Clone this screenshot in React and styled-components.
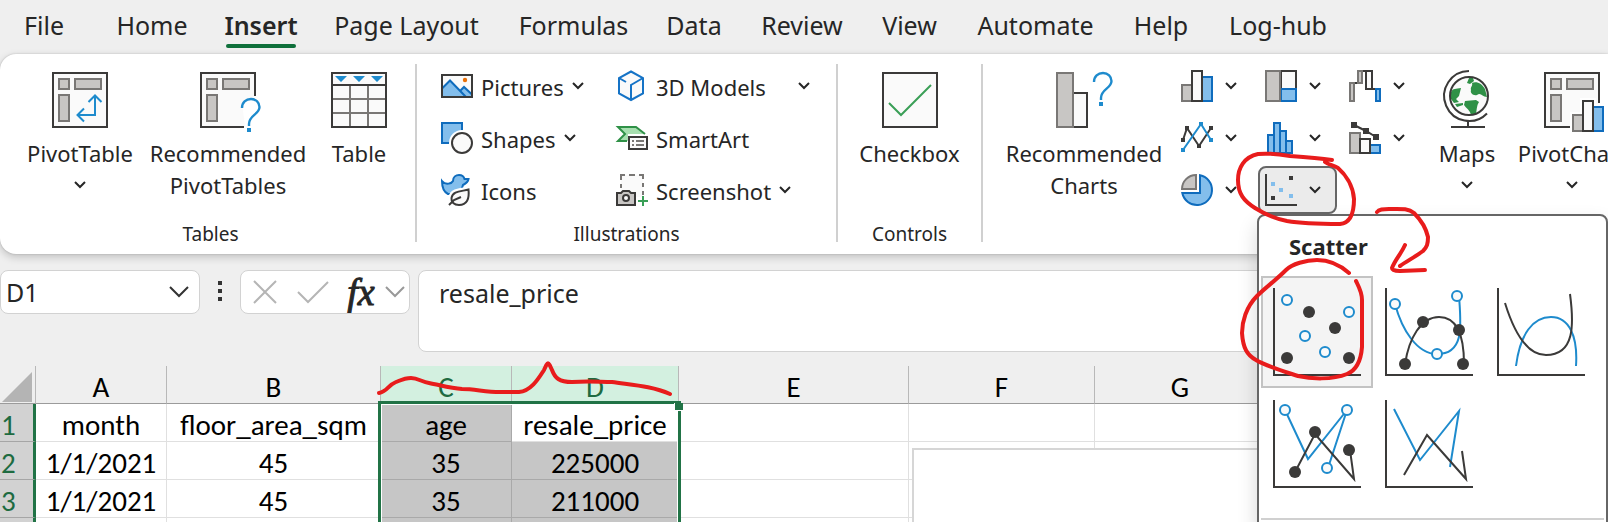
import React from "react";
import styled, { createGlobalStyle, css } from "styled-components";

const UI = '"Noto Sans", "Open Sans", sans-serif';
const CELL = 'Carlito, Lato, "Noto Sans", sans-serif';
const INK = "#3b3a39";
const GREY = "#797775";
const GREYFILL = "#c8c6c4";
const PAPER = "#fafafa";
const BLUE = "#0f6cbd";
const BLUEFILL = "#83beec";
const ACCENT = "#1e8bcd";
const GREEN = "#217346";

const GlobalStyle = createGlobalStyle`
  *, *::before, *::after { box-sizing: border-box; }
  body { margin: 0; background: #efefef; font-family: ${UI}; color: #262626; }
  button, input, textarea { font: inherit; color: inherit; margin: 0; }
`;

const Page = styled.div`
  position: relative;
  display: flex;
  flex-direction: column;
  height: 100vh;
  overflow: hidden;
  background: #efefef;
`;

const plainButton = css`
  border: 0;
  background: none;
  padding: 0;
  cursor: pointer;
`;

/* Tab strip */
const Tabs = styled.nav`
  display: flex;
  flex: none;
  height: 54px;
  padding: 0 6px;
`;
const Tab = styled.button`
  ${plainButton}
  position: relative;
  flex: none;
  width: ${(p) => p.$w}px;
  height: 52px;
  padding-bottom: 2px;
  font-size: 25px;
  line-height: 50px;
  white-space: nowrap;
  font-weight: ${(p) => (p.$active ? 600 : 400)};
  &::after {
    content: "";
    display: ${(p) => (p.$active ? "block" : "none")};
    position: absolute;
    left: 4px;
    right: 4px;
    bottom: 4px;
    height: 4px;
    border-radius: 2px;
    background: #0f703b;
  }
`;

/* Ribbon */
const Ribbon = styled.div`
  position: relative;
  z-index: 2;
  display: flex;
  flex: none;
  padding: 6px 0 6px 6px;
  background: #fff;
  border-radius: 16px 0 0 16px;
  box-shadow: 0 0 2px rgba(0, 0, 0, 0.2), 0 3px 8px rgba(0, 0, 0, 0.2);
`;
const Group = styled.section`
  flex: none;
  display: flex;
  flex-direction: column;
  width: ${(p) => (p.$w ? `${p.$w}px` : "auto")};
`;
const GroupBody = styled.div`
  display: flex;
  min-height: 156px;
  padding-left: ${(p) => p.$pad || 0}px;
`;
const GroupLabel = styled.div`
  margin-top: 4px;
  font-size: 19px;
  line-height: 28px;
  text-align: center;
`;
const Divider = styled.div`
  flex: none;
  width: 2px;
  margin: 4px 0 6px;
  background: #d0d0d0;
`;
const BigButton = styled.button`
  ${plainButton}
  flex: none;
  display: flex;
  flex-direction: column;
  align-items: center;
  width: ${(p) => p.$w}px;
  padding-top: 12px;
`;
const BigLabel = styled.span`
  display: flex;
  flex-direction: column;
  align-items: center;
  margin-top: 9px;
  font-size: 22px;
  line-height: 32px;
  white-space: nowrap;
`;
const ChevronLine = styled.span`
  display: flex;
  align-items: center;
  height: 32px;
`;
const CommandGrid = styled.div`
  display: grid;
  grid-template-columns: 175px auto;
  grid-auto-rows: 52px;
`;
const Command = styled.button`
  ${plainButton}
  display: flex;
  align-items: center;
  gap: 8px;
  font-size: 22px;
  white-space: nowrap;
`;
const CommandText = styled.span`
  padding: 2px ${(p) => (p.$split ? 24 : 0)}px 0 0;
`;
const Gallery = styled.div`
  flex: none;
  display: grid;
  grid-template-columns: repeat(3, 84px);
  grid-auto-rows: 52px;
`;
const GalleryItem = styled.div`
  position: relative;
  display: flex;
  align-items: center;
`;
const ChartButton = styled.button`
  ${plainButton}
  position: relative;
  display: flex;
  align-items: center;
  justify-content: space-between;
  width: 79px;
  height: 48px;
  padding: 0 14px 0 5px;
  border: 2px solid ${(p) => (p.$open ? "#666" : "transparent")};
  border-radius: 8px;
  background: ${(p) => (p.$open ? "#ebebeb" : "transparent")};
`;
const Icon = styled.svg`
  flex: none;
  display: block;
  overflow: visible;
  fill: none;
`;

/* Scatter drop-down */
const Menu = styled.div`
  position: absolute;
  top: 50px;
  left: -1px;
  width: 351px;
  padding: 0 2px 8px;
  background: #fff;
  border: 2px solid #666;
  border-radius: 8px;
  box-shadow: 0 10px 20px rgba(0, 0, 0, 0.16);
`;
const MenuTitle = styled.h2`
  margin: 0;
  padding: 0 0 0 28px;
  height: 60px;
  font-size: 22px;
  line-height: 60px;
  font-weight: 700;
`;
const MenuGrid = styled.div`
  display: grid;
  grid-template-columns: repeat(3, 112px);
  grid-auto-rows: 112px;
  padding-bottom: 18px;
  border-bottom: 2px solid #d0d0d0;
`;
const Tile = styled.button`
  ${plainButton}
  display: flex;
  padding: 10px;
  border: 2px solid ${(p) => (p.$active ? "#c3c3c3" : "transparent")};
  background: ${(p) => (p.$active ? "#f4f4f4" : "transparent")};
`;

/* Formula bar */
const FormulaBar = styled.div`
  flex: none;
  display: flex;
  align-items: flex-start;
  padding: 16px 0 14px;
`;
const Box = styled.div`
  flex: ${(p) => (p.$grow ? "1 1 0" : "none")};
  display: flex;
  align-items: center;
  width: ${(p) => (p.$w ? `${p.$w}px` : "auto")};
  height: ${(p) => (p.$tall ? 82 : 44)}px;
  margin-left: ${(p) => (p.$grow ? 8 : 0)}px;
  padding-right: ${(p) => p.$pr || 0}px;
  background: #fff;
  border: 1px solid #d2d2d2;
  border-radius: 8px;
  overflow: hidden;
`;
const NameInput = styled.input`
  flex: 1;
  min-width: 0;
  height: 42px;
  border: 0;
  padding: 0 0 0 5px;
  background: none;
  outline: none;
  font-size: 25px;
`;
const FormulaText = styled.textarea`
  flex: 1;
  height: 80px;
  border: 0;
  padding: 4px 20px;
  resize: none;
  outline: none;
  background: none;
  font-size: 25px;
  line-height: 36px;
`;
const IconButton = styled.button`
  ${plainButton}
  flex: none;
  display: flex;
  align-items: center;
  justify-content: center;
  width: ${(p) => p.$w}px;
  height: 42px;
`;
const Fx = styled.span`
  padding-left: 4px;
  font: italic 400 38px/38px "Liberation Serif", serif;
  color: #262626;
  -webkit-text-stroke: 1px #262626;
`;

/* Sheet */
const SheetArea = styled.div`
  position: relative;
  flex: 1;
  min-height: 0;
`;
const Sheet = styled.table`
  width: 100%;
  table-layout: fixed;
  border-collapse: separate;
  border-spacing: 0;
  font-family: ${CELL};
  font-size: 29px;
  line-height: 30px;
  color: #000;
  background: #fff;
`;
const ColHead = styled.th`
  height: 38px;
  padding: 4px 0 0;
  font-weight: 400;
  border-bottom: 1px solid #9b9b9b;
  border-right: 1px solid #b8b8b8;
  background: ${(p) => (p.$sel ? "#d3f0e0" : "#efefef")};
  color: ${(p) => (p.$sel ? "#1e6b41" : "#000")};
`;
const RowHead = styled.th`
  height: 38px;
  padding: 4px 0 0 1px;
  text-align: left;
  font-weight: 400;
  background: #d2d2d2;
  color: #1e6b41;
  border-bottom: 1px solid #a6a6a6;
  border-right: 3px solid ${GREEN};
`;
const Cell = styled.td`
  height: 38px;
  padding: 4px 0 0;
  text-align: center;
  background: ${(p) => (p.$sel ? "#c6c6c6" : "#fff")};
  border: 0 solid ${(p) => (p.$sel ? "#a9a9a9" : "#e0e0e0")};
  border-width: 0 1px 1px 0;
`;
const Selection = styled.div`
  position: absolute;
  top: 35px;
  left: 378px;
  width: 303px;
  bottom: -8px;
  border: 3px solid ${GREEN};
  box-shadow: inset 1px 1px 0 #fff, inset -1px 0 0 #fff;
  &::after {
    content: "";
    position: absolute;
    top: -1px;
    right: -5px;
    width: 9px;
    height: 8px;
    background: ${GREEN};
    border: solid #fff;
    border-width: 0 0 1px 1px;
  }
`;
const ChartFrame = styled.div`
  position: absolute;
  top: 82px;
  left: 912px;
  right: 0;
  bottom: -8px;
  background: #fff;
  border: 2px solid #d6d6d6;
`;
const InkLayer = styled.svg`
  position: absolute;
  inset: 0;
  z-index: 5;
  width: 100%;
  height: 100%;
  pointer-events: none;
  fill: none;
  stroke: #e81c1c;
  stroke-width: 4;
  stroke-linecap: round;
  stroke-linejoin: round;
`;

/* Icon drawings */
const Chevron = () => (
  <Icon width="12" height="8" viewBox="0 0 12 8" stroke="#262626" strokeWidth="2">
    <path d="M1 1 6 6 11 1" />
  </Icon>
);
const WideChevron = ({ color }) => (
  <Icon width="20" height="12" viewBox="0 0 20 12" stroke={color} strokeWidth="2">
    <path d="M1 1 10 10 19 1" />
  </Icon>
);
const Big = ({ children }) => (
  <Icon width="56" height="56" viewBox="0 0 56 56" strokeWidth="2">{children}</Icon>
);
const Small = ({ children }) => (
  <Icon width="32" height="32" viewBox="0 0 32 32" strokeWidth="2">{children}</Icon>
);
const PivotParts = () => (
  <g stroke={GREY} fill={GREYFILL}>
    <rect x="7" y="7" width="10" height="10" />
    <rect x="23" y="7" width="26" height="10" />
    <rect x="7" y="23" width="10" height="26" />
  </g>
);
const Question = ({ x, y }) => (
  <g transform={`translate(${x} ${y})`}>
    <path d="M1 10C1 4.500 5 1 10 1 15 1 18.500 4.500 18.500 9 18.500 16.500 8 17 8 26V28" stroke={ACCENT} strokeWidth="2.400" />
    <rect x="6" y="30" width="4" height="4" fill={ACCENT} />
  </g>
);
const PivotTableIcon = () => (
  <Big>
    <rect x="1" y="1" width="54" height="54" fill={PAPER} stroke={INK} />
    <PivotParts />
    <path d="M43 24V43H25M36.500 30 43 23.500 49.500 30M32 36.500 25.500 43 32 49.500" stroke={ACCENT} />
  </Big>
);
const RecPivotIcon = () => (
  <Big>
    <path d="M1 1H55V24L42 30 45 55H1Z" fill={PAPER} />
    <path d="M55 24V1H1V55H44" stroke={INK} />
    <PivotParts />
    <Question x={41} y={26} />
  </Big>
);
const TableIcon = () => (
  <Big>
    <rect x="1" y="1" width="54" height="54" fill={PAPER} />
    <path d="M19 14V55M37 14V55M1 27H55M1 41H55" stroke={GREY} />
    <path d="M1 13H55" stroke={INK} />
    <rect x="1" y="1" width="54" height="54" stroke={INK} />
    <path d="M4 4H16L10 10ZM22 4H34L28 10ZM40 4H52L46 10Z" fill={ACCENT} />
  </Big>
);
const CheckboxIcon = () => (
  <Big>
    <rect x="1" y="1" width="54" height="54" fill={PAPER} stroke={INK} />
    <path d="M7 31 19 43 49 13" stroke="#3a9f57" />
  </Big>
);
const RecChartsIcon = () => (
  <Big>
    <rect x="17" y="21" width="14" height="34" fill={PAPER} stroke={INK} />
    <rect x="1" y="1" width="16" height="54" fill={GREYFILL} stroke={GREY} />
    <Question x={37} y={0} />
  </Big>
);
const MapsIcon = () => (
  <Big>
    <circle cx="30" cy="24" r="19" fill={PAPER} />
    <g fill="#2f9147">
      <path d="M33 11C38 9 43 12 46 17L48 25C43 25 42 20 38 23 34 24 31 21 32 18 31 15 34 14 33 11Z" />
      <path d="M12 20C14 16 17 17 22 16L21 20 20 24 17 27 20 30 15 31 12 27Z" />
      <path d="M26 29 37 28 40 30C38 33 38 36 37 42L32 43C31 38 27 36 25 33Z" />
      <path d="M30 6 34 6 35 9 31 12 28 11Z" />
      <path d="M16 32 24 31 24 33 18 35Z" />
    </g>
    <circle cx="30" cy="24" r="19" stroke={INK} />
    <path d="M30 -1A25 25 0 1 0 48 41.500M29 49V55M12 55H46" stroke={INK} />
  </Big>
);
const PivotChartIcon = () => (
  <Big>
    <path d="M1 1H55V31L36 40 26 55H1Z" fill={PAPER} />
    <path d="M55 31V1H1V55H26" stroke={INK} />
    <PivotParts />
    <path d="M27 60V41H37V27H51V33H60" stroke="#fff" />
    <rect x="29" y="43" width="10" height="16" fill={GREYFILL} stroke={GREY} />
    <rect x="49" y="35" width="10" height="24" fill={BLUEFILL} stroke={BLUE} />
    <rect x="39" y="29" width="10" height="30" fill={PAPER} stroke={INK} />
  </Big>
);
const PicturesIcon = () => (
  <Small>
    <rect x="1" y="5" width="30" height="22" fill={PAPER} />
    <path d="M2 18 9 11 25 27H2Z" fill={BLUEFILL} />
    <path d="M19 21 23 17 31 24V27H25Z" fill={BLUEFILL} />
    <path d="M1 18.500 9 10.500 25 27M19 21 23 17 31 24.500" stroke={BLUE} />
    <rect x="1" y="5" width="30" height="22" stroke={INK} />
    <circle cx="24" cy="10" r="2.200" fill="#e8700a" />
  </Small>
);
const ShapesIcon = () => (
  <Small>
    <rect x="1" y="1" width="20" height="20" fill={BLUEFILL} stroke={BLUE} />
    <circle cx="21" cy="21" r="13" fill="#fff" />
    <circle cx="21" cy="21" r="10" fill={PAPER} stroke={INK} />
  </Small>
);
const IconsIcon = () => (
  <Small>
    <path d="M1 7C5 12 11 9 12 7 12 3 15 1 18 1 21 1 23 3 23.500 5H27.500C27 8 24 10 22 11L19 20H7C3 18 1 14 1 7Z" fill={BLUEFILL} stroke={BLUE} />
    <path d="M29 12C31 25 27 33 18 33 11 33 5 28 8 21 11 13 20 15 29 12Z" fill="#fff" />
    <path d="M27.500 15.500C28.500 25 26 31 18 31 13 31 10 28 10.500 24 11.500 17 20 17.500 27.500 15.500Z" fill={PAPER} stroke={INK} />
    <path d="M8 31 13 26 20 23" stroke={INK} />
  </Small>
);
const ModelsIcon = () => (
  <Small>
    <path d="M15 1.500 27 8V23.500L15 30 3 23.500V8Z" fill={PAPER} stroke="#1573c6" />
    <path d="M3 8 10 12M27 8 15 15V30" stroke="#1573c6" />
  </Small>
);
const SmartArtIcon = () => (
  <Small>
    <path d="M2 5H20L29 12H12V19H2L9 12Z" fill="#a7dfb0" />
    <path d="M29 12 20 5H2L9 12 2 19H11" stroke="#2f9147" />
    <rect x="13" y="15" width="18" height="12" fill={PAPER} stroke={INK} />
    <path d="M16 19H18M20 19H28M16 23H18M20 23H28" stroke={GREY} />
  </Small>
);
const ScreenshotIcon = () => (
  <Small>
    <rect x="5" y="1" width="22" height="22" fill={PAPER} />
    <path d="M5 14V10M5 6V1H9M13 1H19M23 1H27V5M27 9V13M27 17V21" stroke={GREY} />
    <path d="M1 19H5L7 17H13L15 19H19V31H1Z" fill={GREYFILL} stroke={INK} />
    <circle cx="10" cy="24" r="3" fill={PAPER} stroke={INK} />
    <path d="M27 22V32M22 27H32" stroke="#3a9f57" />
  </Small>
);
const ColumnIcon = () => (
  <Small>
    <rect x="1" y="15" width="10" height="16" fill={GREYFILL} stroke={GREY} />
    <rect x="21" y="7" width="10" height="24" fill={BLUEFILL} stroke={BLUE} />
    <rect x="11" y="1" width="10" height="30" fill={PAPER} stroke={INK} />
  </Small>
);
const TreemapIcon = () => (
  <Small>
    <rect x="16" y="1" width="15" height="18" fill={PAPER} stroke={INK} />
    <rect x="16" y="19" width="15" height="12" fill={BLUEFILL} stroke={BLUE} />
    <rect x="1" y="1" width="14" height="30" fill={GREYFILL} stroke={GREY} />
  </Small>
);
const WaterfallIcon = () => (
  <Small>
    <path d="M5 13H9M13 1H17M23 19H27" stroke={INK} />
    <rect x="1" y="13" width="4" height="18" fill={GREYFILL} stroke={GREY} />
    <rect x="9" y="1" width="4" height="12" fill={GREYFILL} stroke={GREY} />
    <rect x="17" y="1" width="6" height="18" fill={PAPER} stroke={INK} />
    <rect x="27" y="19" width="4" height="12" fill={BLUEFILL} stroke={BLUE} />
  </Small>
);
const LineIcon = () => (
  <Small>
    <path d="M2 18 6 6 18 24 30 6" stroke={INK} />
    <path d="M0 16h4v4h-4zM4 4h4v4h-4zM16 22h4v4h-4zM28 4h4v4h-4z" fill={INK} />
    <path d="M2 28 20 2 30 18" stroke={ACCENT} />
    <path d="M0 26h4v4h-4zM18 0h4v4h-4zM28 16h4v4h-4z" fill={ACCENT} />
  </Small>
);
const HistogramIcon = () => (
  <Small>
    <g fill={BLUEFILL} stroke={BLUE}>
      <rect x="3" y="13" width="6" height="18" />
      <rect x="15" y="9" width="6" height="22" />
      <rect x="21" y="19" width="6" height="12" />
      <rect x="9" y="1" width="6" height="30" />
    </g>
  </Small>
);
const ComboIcon = () => (
  <Small>
    <rect x="1" y="11" width="10" height="20" fill={GREYFILL} stroke={GREY} />
    <rect x="21" y="23" width="10" height="8" fill={BLUEFILL} stroke={BLUE} />
    <rect x="11" y="17" width="10" height="14" fill={PAPER} stroke={INK} />
    <path d="M5 3 17 9 27 15" stroke={INK} />
    <path d="M2 0h6v6h-6zM14 6h6v6h-6zM24 12h6v6h-6z" fill={INK} />
  </Small>
);
const PieIcon = () => (
  <Small>
    <path d="M15 15V1A14 14 0 0 0 1 15Z" fill={GREYFILL} stroke={GREY} />
    <path d="M19 1.300A15 15 0 1 1 1.300 19H19Z" fill={BLUEFILL} stroke={BLUE} />
  </Small>
);
const ScatterIcon = () => (
  <Small>
    <path d="M1 0V31H32" stroke={INK} />
    <path d="M24 2h4v4h-4zM6 22h4v4h-4z" fill={INK} />
    <path d="M6 8h4v4h-4zM14 14h4v4h-4zM24 20h4v4h-4z" fill={BLUEFILL} />
  </Small>
);

const dots = (list, filled) =>
  list.map(([x, y]) => (
    <circle
      key={`${x}-${y}`}
      cx={x}
      cy={y}
      r={filled ? 6 : 5}
      fill={filled ? INK : PAPER}
      stroke={filled ? "none" : ACCENT}
    />
  ));
const Preview = ({ children }) => (
  <Icon width="88" height="88" viewBox="0 0 88 88" strokeWidth="2">
    {children}
    <path d="M1 0V87H88" stroke={INK} />
  </Icon>
);
const previews = [
  {
    name: "Scatter",
    art: (
      <>
        {dots([[14, 12], [76, 24], [32, 48], [52, 64]], false)}
        {dots([[36, 24], [62, 40], [14, 70], [76, 70]], true)}
      </>
    ),
  },
  {
    name: "Scatter with smooth lines and markers",
    art: (
      <>
        <path d="M10 16C17 42 32 66 52 66 80 66 76 36 74 8" stroke={ACCENT} />
        <path d="M20 76C24 50 36 29 54 29 72 29 79 48 79 76" stroke={INK} />
        {dots([[10, 16], [72, 8], [52, 66]], false)}
        {dots([[38, 34], [74, 42], [20, 76], [78, 76]], true)}
      </>
    ),
  },
  {
    name: "Scatter with smooth lines",
    art: (
      <>
        <path d="M19 78C23 46 36 29 54 29 72 29 81 48 79 78" stroke={ACCENT} />
        <path d="M8 15C17 44 30 67 49 67 78 67 77 36 73 6" stroke={INK} />
      </>
    ),
  },
  {
    name: "Scatter with straight lines and markers",
    art: (
      <>
        <path d="M12 10 35 59 74 10 55 68" stroke={ACCENT} />
        <path d="M22 72 42 34 81 79 77 50" stroke={INK} />
        {dots([[12, 10], [74, 10], [54, 68]], false)}
        {dots([[42, 32], [76, 50], [22, 72]], true)}
      </>
    ),
  },
  {
    name: "Scatter with straight lines",
    art: (
      <>
        <path d="M9 9 35 60 74 11 65 67" stroke={ACCENT} />
        <path d="M19 75 42 35 81 79 77 51" stroke={INK} />
      </>
    ),
  },
];

const tabs = [
  ["File", 76],
  ["Home", 140],
  ["Insert", 78],
  ["Page Layout", 213],
  ["Formulas", 121],
  ["Data", 120],
  ["Review", 96],
  ["View", 119],
  ["Automate", 133],
  ["Help", 118],
  ["Log-hub", 116],
];
const commands = [
  { icon: PicturesIcon, text: "Pictures", menu: true },
  { icon: ModelsIcon, text: "3D Models", menu: true, split: true },
  { icon: ShapesIcon, text: "Shapes", menu: true },
  { icon: SmartArtIcon, text: "SmartArt" },
  { icon: IconsIcon, text: "Icons" },
  { icon: ScreenshotIcon, text: "Screenshot", menu: true },
];
const charts = [
  ["Column chart", ColumnIcon],
  ["Hierarchy chart", TreemapIcon],
  ["Waterfall chart", WaterfallIcon],
  ["Line chart", LineIcon],
  ["Statistic chart", HistogramIcon],
  ["Combo chart", ComboIcon],
  ["Pie chart", PieIcon],
];
const widths = [36, 131, 214, 131, 167, 230, 186, 171];
const rows = [
  ["1", "month", "floor_area_sqm", "age", "resale_price"],
  ["2", "1/1/2021", "45", "35", "225000"],
  ["3", "1/1/2021", "45", "35", "211000"],
  ["", "", "", "", ""],
];

function BigCommand({ icon: Art, lines, width, menu }) {
  return (
    <BigButton $w={width}>
      <Art />
      <BigLabel>
        {lines.map((line) => (
          <span key={line}>{line}</span>
        ))}
        {menu && (
          <ChevronLine>
            <Chevron />
          </ChevronLine>
        )}
      </BigLabel>
    </BigButton>
  );
}

export default function App() {
  return (
    <Page>
      <GlobalStyle />
      <Tabs>
        {tabs.map(([name, w]) => (
          <Tab key={name} $w={w} $active={name === "Insert"}>
            {name}
          </Tab>
        ))}
      </Tabs>

      <Ribbon>
        <Group $w={409}>
          <GroupBody $pad={16}>
            <BigCommand icon={PivotTableIcon} lines={["PivotTable"]} width={116} menu />
            <BigCommand icon={RecPivotIcon} lines={["Recommended", "PivotTables"]} width={180} />
            <BigCommand icon={TableIcon} lines={["Table"]} width={82} />
          </GroupBody>
          <GroupLabel>Tables</GroupLabel>
        </Group>
        <Divider />
        <Group $w={419}>
          <GroupBody $pad={24}>
            <CommandGrid>
              {commands.map(({ icon: Art, text, menu, split }) => (
                <Command key={text}>
                  <Art />
                  <CommandText $split={split}>{text}</CommandText>
                  {menu && <Chevron />}
                </Command>
              ))}
            </CommandGrid>
          </GroupBody>
          <GroupLabel>Illustrations</GroupLabel>
        </Group>
        <Divider />
        <Group $w={143}>
          <GroupBody>
            <BigCommand icon={CheckboxIcon} lines={["Checkbox"]} width={143} />
          </GroupBody>
          <GroupLabel>Controls</GroupLabel>
        </Group>
        <Divider />
        <Group>
          <GroupBody $pad={11}>
            <BigCommand icon={RecChartsIcon} lines={["Recommended", "Charts"]} width={180} />
            <Gallery>
              {charts.map(([name, Art]) => (
                <GalleryItem key={name}>
                  <ChartButton aria-label={name}>
                    <Art />
                    <Chevron />
                  </ChartButton>
                </GalleryItem>
              ))}
              <GalleryItem>
                <Menu>
                  <MenuTitle>Scatter</MenuTitle>
                  <MenuGrid>
                    {previews.map(({ name, art }, i) => (
                      <Tile key={name} aria-label={name} $active={i === 0}>
                        <Preview>{art}</Preview>
                      </Tile>
                    ))}
                  </MenuGrid>
                </Menu>
                <ChartButton aria-label="Scatter chart" aria-expanded="true" $open>
                  <ScatterIcon />
                  <Chevron />
                </ChartButton>
              </GalleryItem>
            </Gallery>
            <BigCommand icon={MapsIcon} lines={["Maps"]} width={82} menu />
            <BigCommand icon={PivotChartIcon} lines={["PivotChart"]} width={128} menu />
          </GroupBody>
        </Group>
      </Ribbon>

      <FormulaBar>
        <Box $w={200} $pr={4}>
          <NameInput aria-label="Name box" defaultValue="D1" />
          <IconButton $w={32} aria-label="Open name list">
            <WideChevron color="#333" />
          </IconButton>
        </Box>
        <IconButton $w={40} aria-label="Resize name box">
          <Icon width="4" height="20" viewBox="0 0 4 20">
            <path d="M0 0h4v4H0zM0 8h4v4H0zM0 16h4v4H0z" fill="#333" />
          </Icon>
        </IconButton>
        <Box $w={170}>
          <IconButton $w={48} aria-label="Cancel">
            <Icon width="24" height="24" viewBox="0 0 24 24" stroke="#b5b5b5" strokeWidth="2">
              <path d="M1 1 23 23M23 1 1 23" />
            </Icon>
          </IconButton>
          <IconButton $w={48} aria-label="Enter">
            <Icon width="32" height="22" viewBox="0 0 32 22" stroke="#b5b5b5" strokeWidth="2">
              <path d="M1 11 11 21 31 1" />
            </Icon>
          </IconButton>
          <IconButton $w={44} aria-label="Insert function">
            <Fx>fx</Fx>
          </IconButton>
          <IconButton $w={28} aria-label="Function list">
            <WideChevron color="#999" />
          </IconButton>
        </Box>
        <Box $grow $tall>
          <FormulaText aria-label="Formula" defaultValue="resale_price" />
        </Box>
      </FormulaBar>

      <SheetArea>
        <Sheet>
          <colgroup>
            {widths.map((w, i) => (
              <col key={i} width={w} />
            ))}
            <col />
          </colgroup>
          <thead>
            <tr>
              <ColHead>
                <Icon width="34" height="30" viewBox="0 0 34 30">
                  <path d="M32 0V30H2Z" fill="#b4b4b4" />
                </Icon>
              </ColHead>
              {["A", "B", "C", "D", "E", "F", "G", ""].map((c) => (
                <ColHead key={c} $sel={c === "C" || c === "D"}>
                  {c}
                </ColHead>
              ))}
            </tr>
          </thead>
          <tbody>
            {rows.map(([n, ...values], r) => (
              <tr key={r}>
                <RowHead>{n}</RowHead>
                {values.map((v, c) => (
                  <Cell key={c} $sel={c === 2 || (c === 3 && r > 0)}>
                    {v}
                  </Cell>
                ))}
                <Cell />
                <Cell />
                <Cell />
                <Cell />
              </tr>
            ))}
          </tbody>
        </Sheet>
        <Selection />
        <ChartFrame />
      </SheetArea>

      <InkLayer>
        <path d="M1332 160C1318 158 1304 157 1290 156 1278 154 1268 153 1258 154 1244 157 1238 168 1238 180 1238 194 1244 201 1255 208 1266 215 1277 219 1287 221 1304 224 1324 224 1340 224 1351 223 1354 212 1354 199 1353 185 1345 174 1338 168 1333 165 1329 165 1325 162" />
        <path d="M1377 212C1379 209 1383 209 1389 209 1400 209 1408 208 1414 213 1421 220 1426 228 1428 237 1428 244 1427 247 1423 251 1415 257 1407 261 1400 266" />
        <path d="M1405 245C1401 254 1395 260 1392 268 1392 270 1395 271 1400 271L1425 270" />
        <path d="M1349 273C1340 265 1328 260 1317 260 1306 260 1292 264 1286 270 1275 281 1266 287 1257 296 1246 307 1242 322 1242 333 1243 348 1247 355 1256 360 1266 366 1286 372 1298 376 1311 379 1332 380 1347 374 1357 370 1361 360 1362 347V300C1362 292 1359 287 1356 281" />
        <path d="M379 393C387 392 388 385 396 382 401 380 405 378 411 378 418 378 422 382 429 383 440 385 450 388 462 389 475 389 485 392 500 392H519C532 391 540 376 544 370 548 361 548 361 552 370 555 378 559 382 572 382 590 381 600 382 612 382 632 385 652 386 670 394" />
      </InkLayer>
    </Page>
  );
}
